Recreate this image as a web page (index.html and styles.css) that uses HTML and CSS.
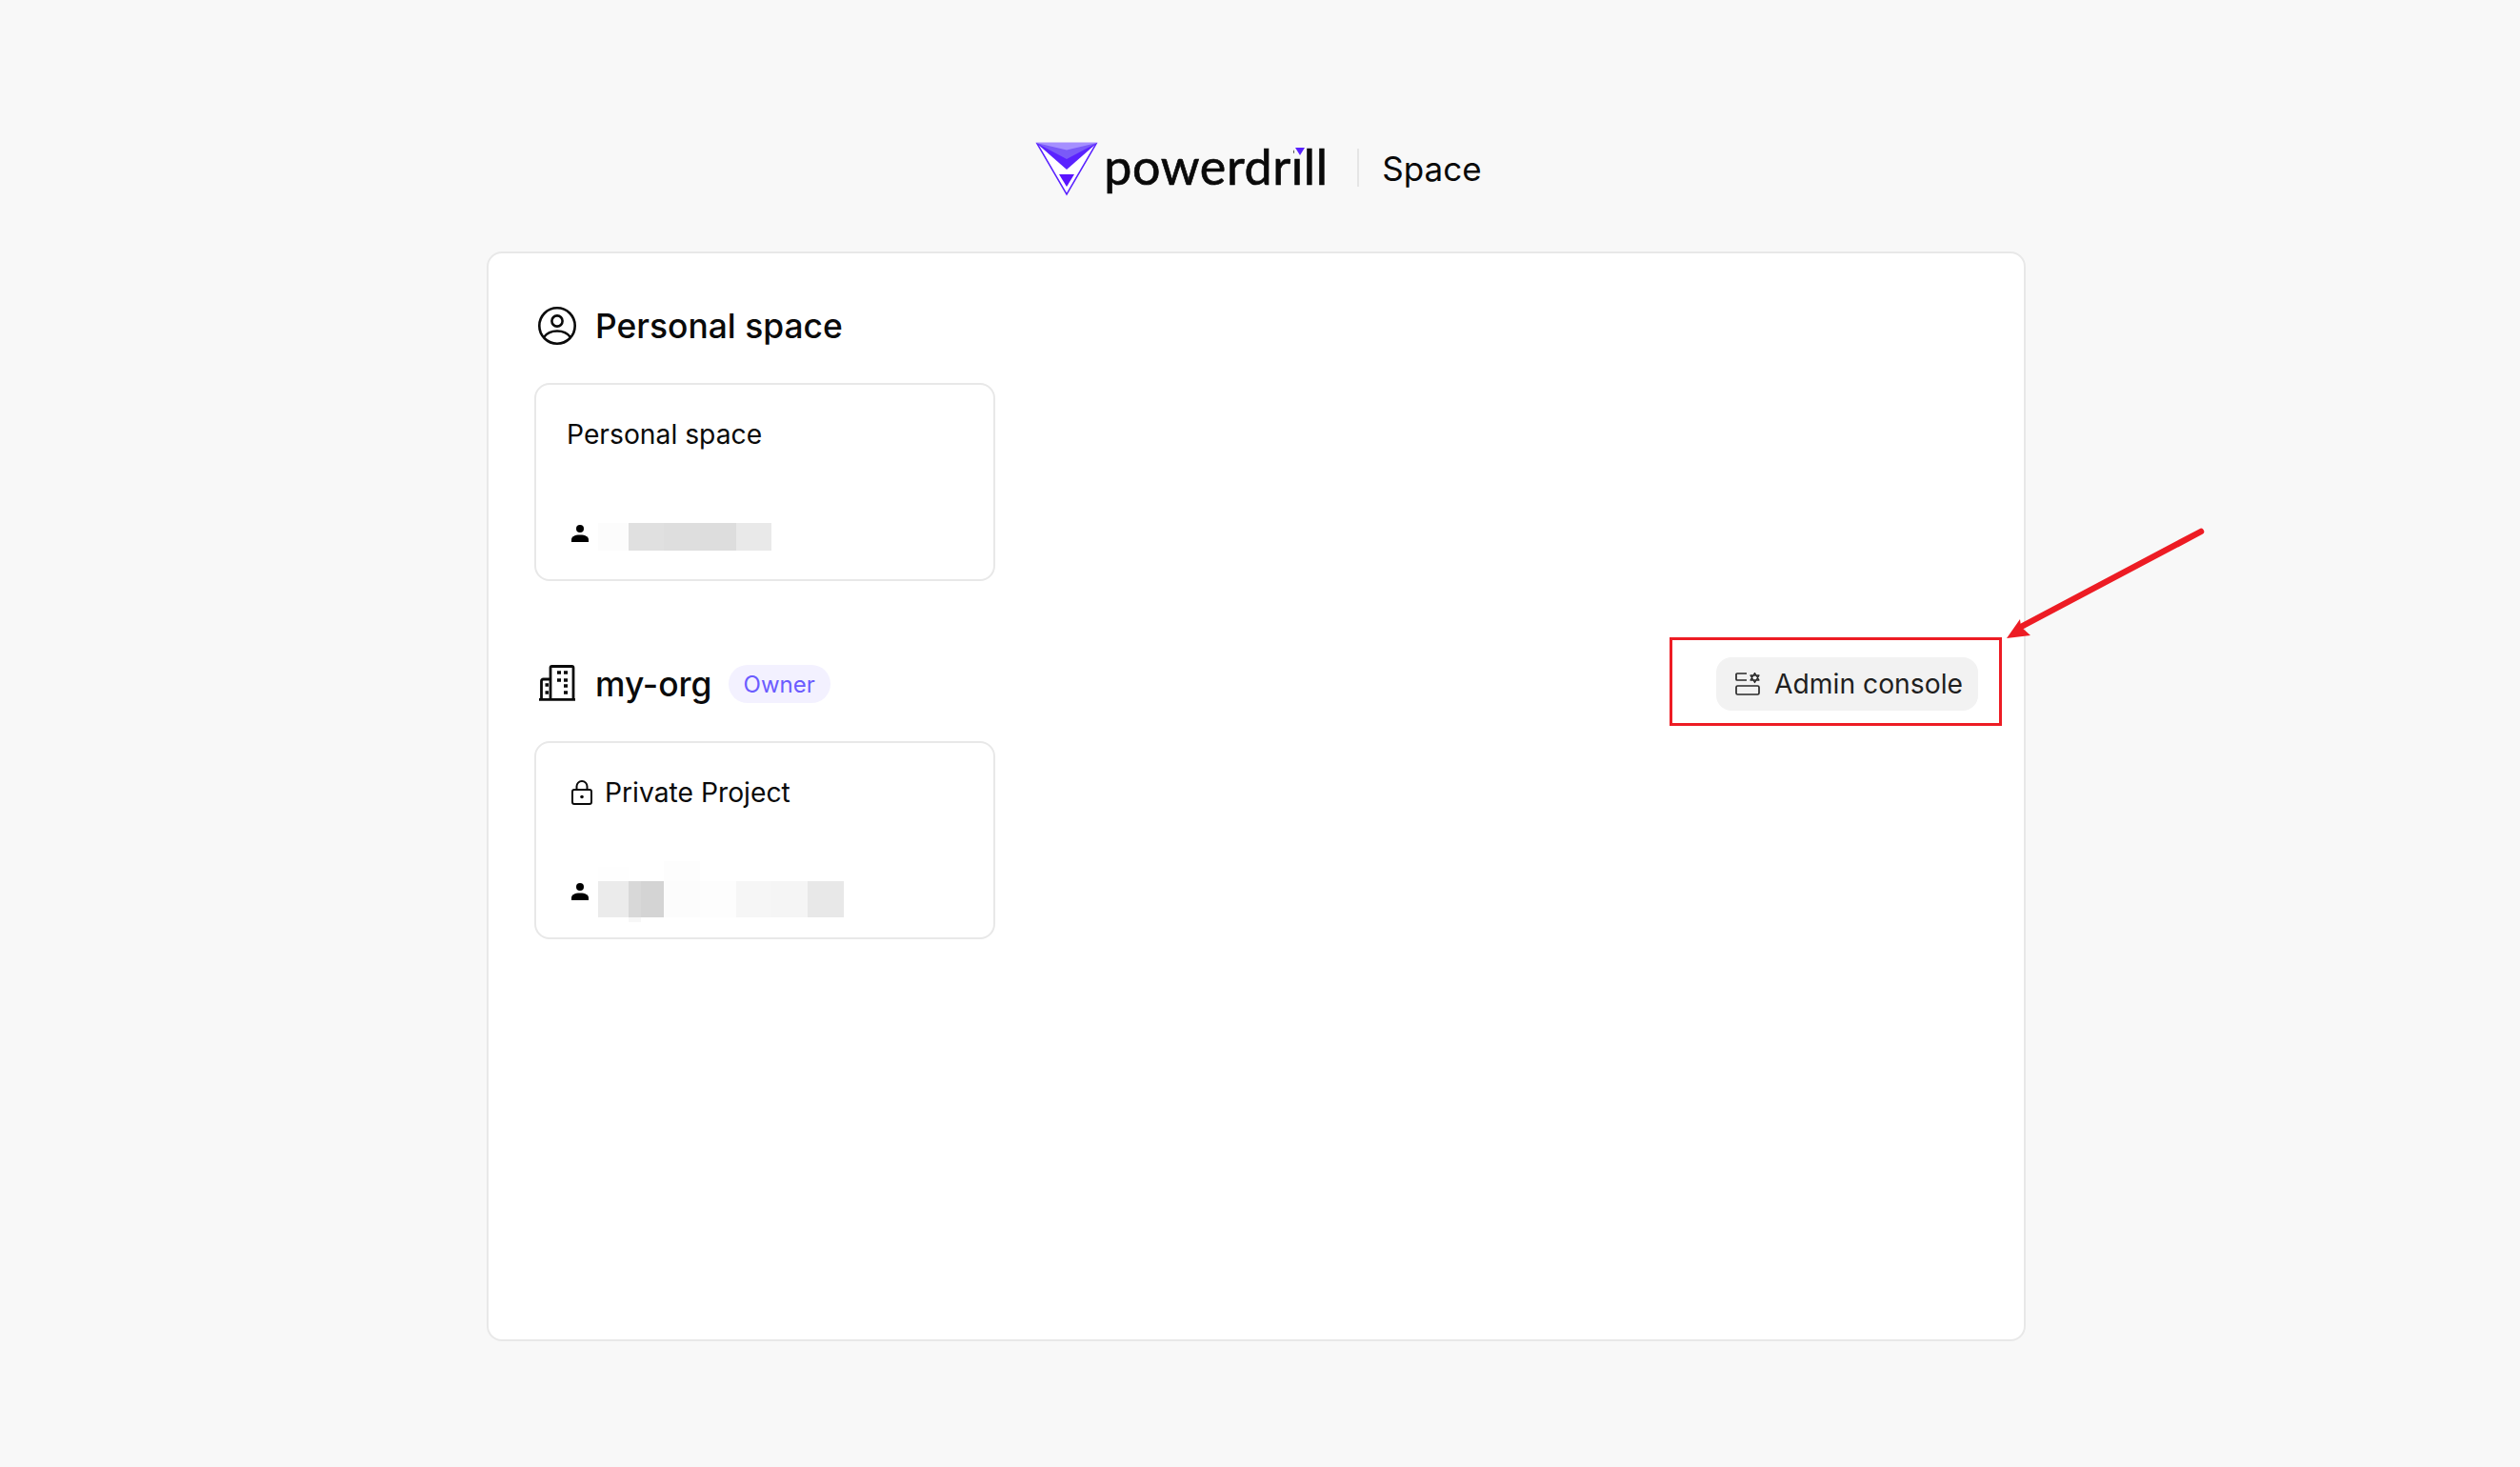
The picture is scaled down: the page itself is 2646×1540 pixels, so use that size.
FILE: index.html
```html
<!DOCTYPE html>
<html lang="en">
<head>
<meta charset="utf-8">
<title>Powerdrill Space</title>
<link rel="stylesheet" href="styles.css">
</head>
<body>
<div class="page">
  <header class="brand">
    <svg class="brand-mark" viewBox="-1 -1 66 57" width="66" height="57">
      <polygon points="0.8,0.5 63.2,0.5 32,54" fill="#fff" stroke="#5a22ff" stroke-width="1.5"/>
      <polygon points="0,0 64,0 32,28" fill="#5a22ff"/>
      <polygon points="0,0 64,0 32,17" fill="#7a5af8"/>
      <polygon points="0,0 64,0 32,7.5" fill="#a58fff"/>
      <polygon points="24,33 40,33 32,46" fill="#5a14ff"/>
    </svg>
    <span class="wordmark">powerdrill<svg class="wordmark-dot" viewBox="0 0 12 14" width="12" height="14"><rect width="12" height="14" fill="#f8f8f8"/><polygon points="1,4 11,4 6,12" fill="#5a22ff"/></svg></span>
    <span class="brand-divider"></span>
    <span class="brand-title">Space</span>
  </header>

  <main class="panel">
    <section class="group">
      <div class="group-head">
        <svg class="head-icon" viewBox="0 0 40 40" fill="none" stroke="#0a0a0a" stroke-width="2.6">
          <ellipse cx="20" cy="20" rx="18.7" ry="18.7"/>
          <circle cx="20" cy="15" r="5.6"/>
          <path d="M6 32c3-4 8-6.500 14-6.500s11 2.500 14 6.500"/>
        </svg>
        <h2 class="group-name">Personal space</h2>
      </div>
      <article class="space-card">
        <div class="card-title">Personal space</div>
        <div class="card-owner">
          <svg class="owner-icon" viewBox="0 0 18 18"><circle cx="9" cy="4" r="4" fill="#000"/><path d="M0 18v-2.500c0-3 3-5 9-5s9 2 9 5V18z" fill="#000"/></svg>
          <div class="blur-row">
            <span class="px w32 c-fc"></span><span class="px w37 c-e0"></span><span class="px w38 c-de"></span><span class="px w38 c-dd"></span><span class="px w37 c-e9"></span>
          </div>
        </div>
      </article>
    </section>

    <section class="group">
      <div class="group-head">
        <svg class="head-icon" viewBox="0 0 40 40" fill="none" stroke="#0a0a0a" stroke-width="2.800">
          <path d="M1 36.300h38"/>
          <path d="M13 36V3a1.500 1.500 0 0 1 1.500-1.500h21A1.500 1.500 0 0 1 37 3v33"/>
          <path d="M13 15H5.500A2 2 0 0 0 3.500 17v19"/>
          <path d="M20 8h4M27 8h4M20 16h4M27 16h4M27 22h4M27 29h4M7.500 21h3.500M7.500 29h3.500" stroke-width="3.400"/>
        </svg>
        <h2 class="group-name">my-org</h2>
        <span class="role-badge">Owner</span>
        <button class="admin-btn" type="button">
          <svg class="admin-icon" viewBox="0 0 26 24" fill="none" stroke="#2a2a2a" stroke-width="1.700">
            <path d="M12 1H2a1 1 0 0 0-1 1v5a1 1 0 0 0 1 1h10"/>
            <rect x="1" y="14" width="24" height="9" rx="1.500"/>
            <path d="M20.500 0.500l4.500 7.500h-9zM20.500 10.500l-4.500-7.500h9z" stroke-width="1.300" stroke-linejoin="round"/>
          </svg>
          Admin console
        </button>
      </div>
      <article class="space-card">
        <div class="card-title">
          <svg class="lock-icon" viewBox="0 0 22 26" fill="none" stroke="#0a0a0a" stroke-width="2">
            <rect x="1" y="10" width="20" height="15" rx="2"/>
            <path d="M5.500 10V6.500a5.500 5.500 0 0 1 11 0V10"/>
            <circle cx="11" cy="17.500" r="1.800" fill="#0a0a0a" stroke="none"/>
          </svg>
          Private Project
        </div>
        <div class="card-owner">
          <svg class="owner-icon" viewBox="0 0 18 18"><circle cx="9" cy="4" r="4" fill="#000"/><path d="M0 18v-2.500c0-3 3-5 9-5s9 2 9 5V18z" fill="#000"/></svg>
          <div class="blur-row blur-tall">
            <span class="ghost ghost-a"></span><span class="ghost ghost-b"></span><span class="ghost ghost-c"></span>
            <span class="px w32 c-eb"></span><span class="px w13 c-d8"></span><span class="px w24 c-d4"></span><span class="px w38 c-fc"></span><span class="px w38 c-fd"></span><span class="px w37 c-f6"></span><span class="px w38 c-f5"></span><span class="px w38 c-e8"></span>
          </div>
        </div>
      </article>
    </section>
  </main>

  <div class="callout-box"></div>
  <svg class="callout-arrow" viewBox="0 0 220 125" width="220" height="125">
    <path d="M206 5L17 105" fill="none" stroke="#ed1c24" stroke-width="6.500" stroke-linecap="round"/>
    <polygon points="2,117 16,97 17,105 27,114" fill="#ed1c24"/>
  </svg>
</div>
</body>
</html>
```
FILE: styles.css
```css
* { box-sizing: border-box; }

html, body {
  margin: 0;
  height: 100%;
}

body {
  background: #f8f8f8;
  color: #0a0a0a;
  font-family: Inter, "Liberation Sans", sans-serif;
}

.page {
  position: relative;
  height: 1540px;
  display: flex;
  flex-direction: column;
  align-items: center;
  padding-top: 149px;
  overflow: hidden;
}

/* Header */
.brand {
  display: flex;
  align-items: flex-start;
  height: 57px;
  margin: 0 3px 58px 0;
}

.brand-mark { flex: none; }

.wordmark {
  position: relative;
  margin-left: 6px;
  width: 235px;
  font-family: Lato, Inter, sans-serif;
  font-size: 52px;
  line-height: 51px;
  font-weight: 400;
  letter-spacing: 0.6px;
  -webkit-text-stroke: 0.7px #0a0a0a;
  color: #0a0a0a;
  white-space: nowrap;
}

.wordmark-dot {
  position: absolute;
  left: 200px;
  top: 2px;
}

.brand-divider {
  width: 2px;
  height: 40px;
  margin: 7px 24px 0 31px;
  background: #e5e5e5;
}

.brand-title {
  font-size: 35px;
  line-height: 56px;
  font-weight: 400;
}

/* Panel */
.panel {
  width: 1616px;
  height: 1144px;
  margin-right: 8px;
  padding: 48px;
  background: #fff;
  border: 2px solid #e8e8e8;
  border-radius: 16px;
  display: flex;
  flex-direction: column;
  gap: 80px;
}

.group {
  display: flex;
  flex-direction: column;
  gap: 32px;
}

.group-head {
  display: flex;
  align-items: center;
  height: 56px;
}

.head-icon {
  width: 40px;
  height: 40px;
  margin: 0 20px 0 4px;
  flex: none;
}

.group-name {
  margin: 0;
  padding-top: 2px;
  font-size: 35.4px;
  line-height: 56px;
  font-weight: 450;
}

.role-badge {
  margin-left: 17px;
  height: 40px;
  padding: 0 16px;
  display: flex;
  align-items: center;
  border-radius: 20px;
  background: #f3f1ff;
  color: #6b5cff;
  font-size: 24px;
}

.admin-btn {
  margin-left: auto;
  width: 275px;
  height: 56px;
  padding: 0 16px 0 20px;
  display: flex;
  align-items: center;
  gap: 15px;
  border: 0;
  border-radius: 16px;
  background: #f2f2f2;
  color: #1f1f1f;
  font-family: inherit;
  font-size: 28.25px;
  font-weight: 400;
  white-space: nowrap;
}

.admin-icon {
  width: 26px;
  height: 24px;
  flex: none;
}

/* Cards */
.space-card {
  width: 484px;
  height: 208px;
  padding: 32px;
  background: #fff;
  border: 2px solid #e8e8e8;
  border-radius: 16px;
}

.card-title {
  display: flex;
  align-items: center;
  height: 40px;
  font-size: 28.25px;
  line-height: 40px;
  font-weight: 400;
}

.lock-icon {
  width: 22px;
  height: 26px;
  margin: 0 13px 0 5px;
  flex: none;
}

.card-owner {
  display: flex;
  align-items: flex-start;
  margin-top: 73px;
}

.owner-icon {
  width: 18px;
  height: 18px;
  margin: 2px 10px 0 5px;
  flex: none;
}

.blur-row {
  position: relative;
  display: flex;
  height: 29px;
}

.blur-row.blur-tall { height: 38px; }

.px { display: block; height: 100%; }

.ghost { position: absolute; display: block; }
.ghost-a { left: 69px; top: -21px; width: 38px; height: 21px; background: #fdfdfd; }
.ghost-b { left: 0; top: -15px; width: 32px; height: 15px; background: #fefefe; }
.ghost-c { left: 32px; top: 38px; width: 13px; height: 5px; background: #f7f7f7; }

.w13 { width: 13px; }
.w24 { width: 24px; }
.w32 { width: 32px; }
.w37 { width: 37px; }
.w38 { width: 38px; }

.c-d4 { background: #d4d4d4; }
.c-d8 { background: #d8d8d8; }
.c-dd { background: #dddddd; }
.c-de { background: #dedede; }
.c-e0 { background: #e0e0e0; }
.c-e8 { background: #e8e8e8; }
.c-e9 { background: #e9e9e9; }
.c-eb { background: #ebebeb; }
.c-f5 { background: #f5f5f5; }
.c-f6 { background: #f6f6f6; }
.c-fc { background: #fcfcfc; }
.c-fd { background: #fdfdfd; }

/* Annotation drawn on top of the screenshot */
.callout-box {
  position: absolute;
  left: 1753px;
  top: 669px;
  width: 349px;
  height: 93px;
  border: 3px solid #ed1c24;
}

.callout-arrow {
  position: absolute;
  left: 2105px;
  top: 553px;
}
```
